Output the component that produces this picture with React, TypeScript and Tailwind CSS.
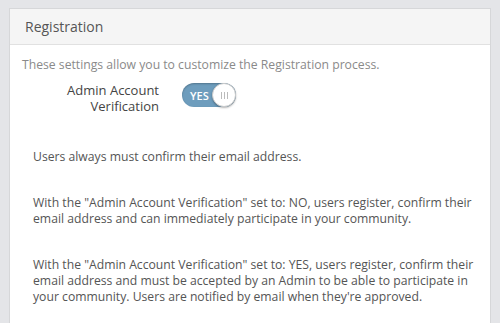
export default function App() {
  return (
    <div className="min-h-screen bg-[#e4e5e8] pt-2 px-[9px] font-['Open_Sans',sans-serif]">
      <div className="border border-[#d6d7d9] bg-white">
        <div className="h-[36px] bg-[#f5f5f5] border-b border-[#e1e1e1] pl-[15px] flex items-center">
          <h2 className="text-[14px] text-[#555] leading-none">Registration</h2>
        </div>
        <div className="pl-[12px] pr-4 pt-[11px] pb-6">
          <p className="text-[12.2px] text-[#8a8a8a] leading-[18px]">
            These settings allow you to customize the Registration process.
          </p>

          <div className="mt-[8px] flex items-start">
            <label className="w-[137px] text-right text-[13px] leading-[16px] text-[#444]">
              Admin Account Verification
            </label>
            <button
              type="button"
              className="ml-[23px] mt-[1px] h-[24px] w-[54px] rounded-full bg-[#6e9dbd] shadow-[inset_0_1px_2px_rgba(0,0,0,0.25)] flex items-center relative"
            >
              <span className="pl-[8px] text-[11px] font-semibold text-white leading-none">YES</span>
              <span className="absolute right-0 top-0 h-[24px] w-[24px] rounded-full bg-white border border-[#ccc] shadow-[0_1px_2px_rgba(0,0,0,0.3)] flex items-center justify-center gap-[2px]">
                <span className="w-px h-[7px] bg-[#bbb]" />
                <span className="w-px h-[7px] bg-[#bbb]" />
                <span className="w-px h-[7px] bg-[#bbb]" />
              </span>
            </button>
          </div>

          <div className="pl-[11px] text-[12.2px] leading-[16px] text-[#555]">
            <p className="mt-[35px]">Users always must confirm their email address.</p>
            <p className="mt-[30px]">
              With the "Admin Account Verification" set to: NO, users register, confirm their email address and can
              immediately participate in your community.
            </p>
            <p className="mt-[30px]">
              With the "Admin Account Verification" set to: YES, users register, confirm their email address and must be
              accepted by an Admin to be able to participate in your community. Users are notified by email when they're
              approved.
            </p>
          </div>
        </div>
      </div>
    </div>
  );
}
